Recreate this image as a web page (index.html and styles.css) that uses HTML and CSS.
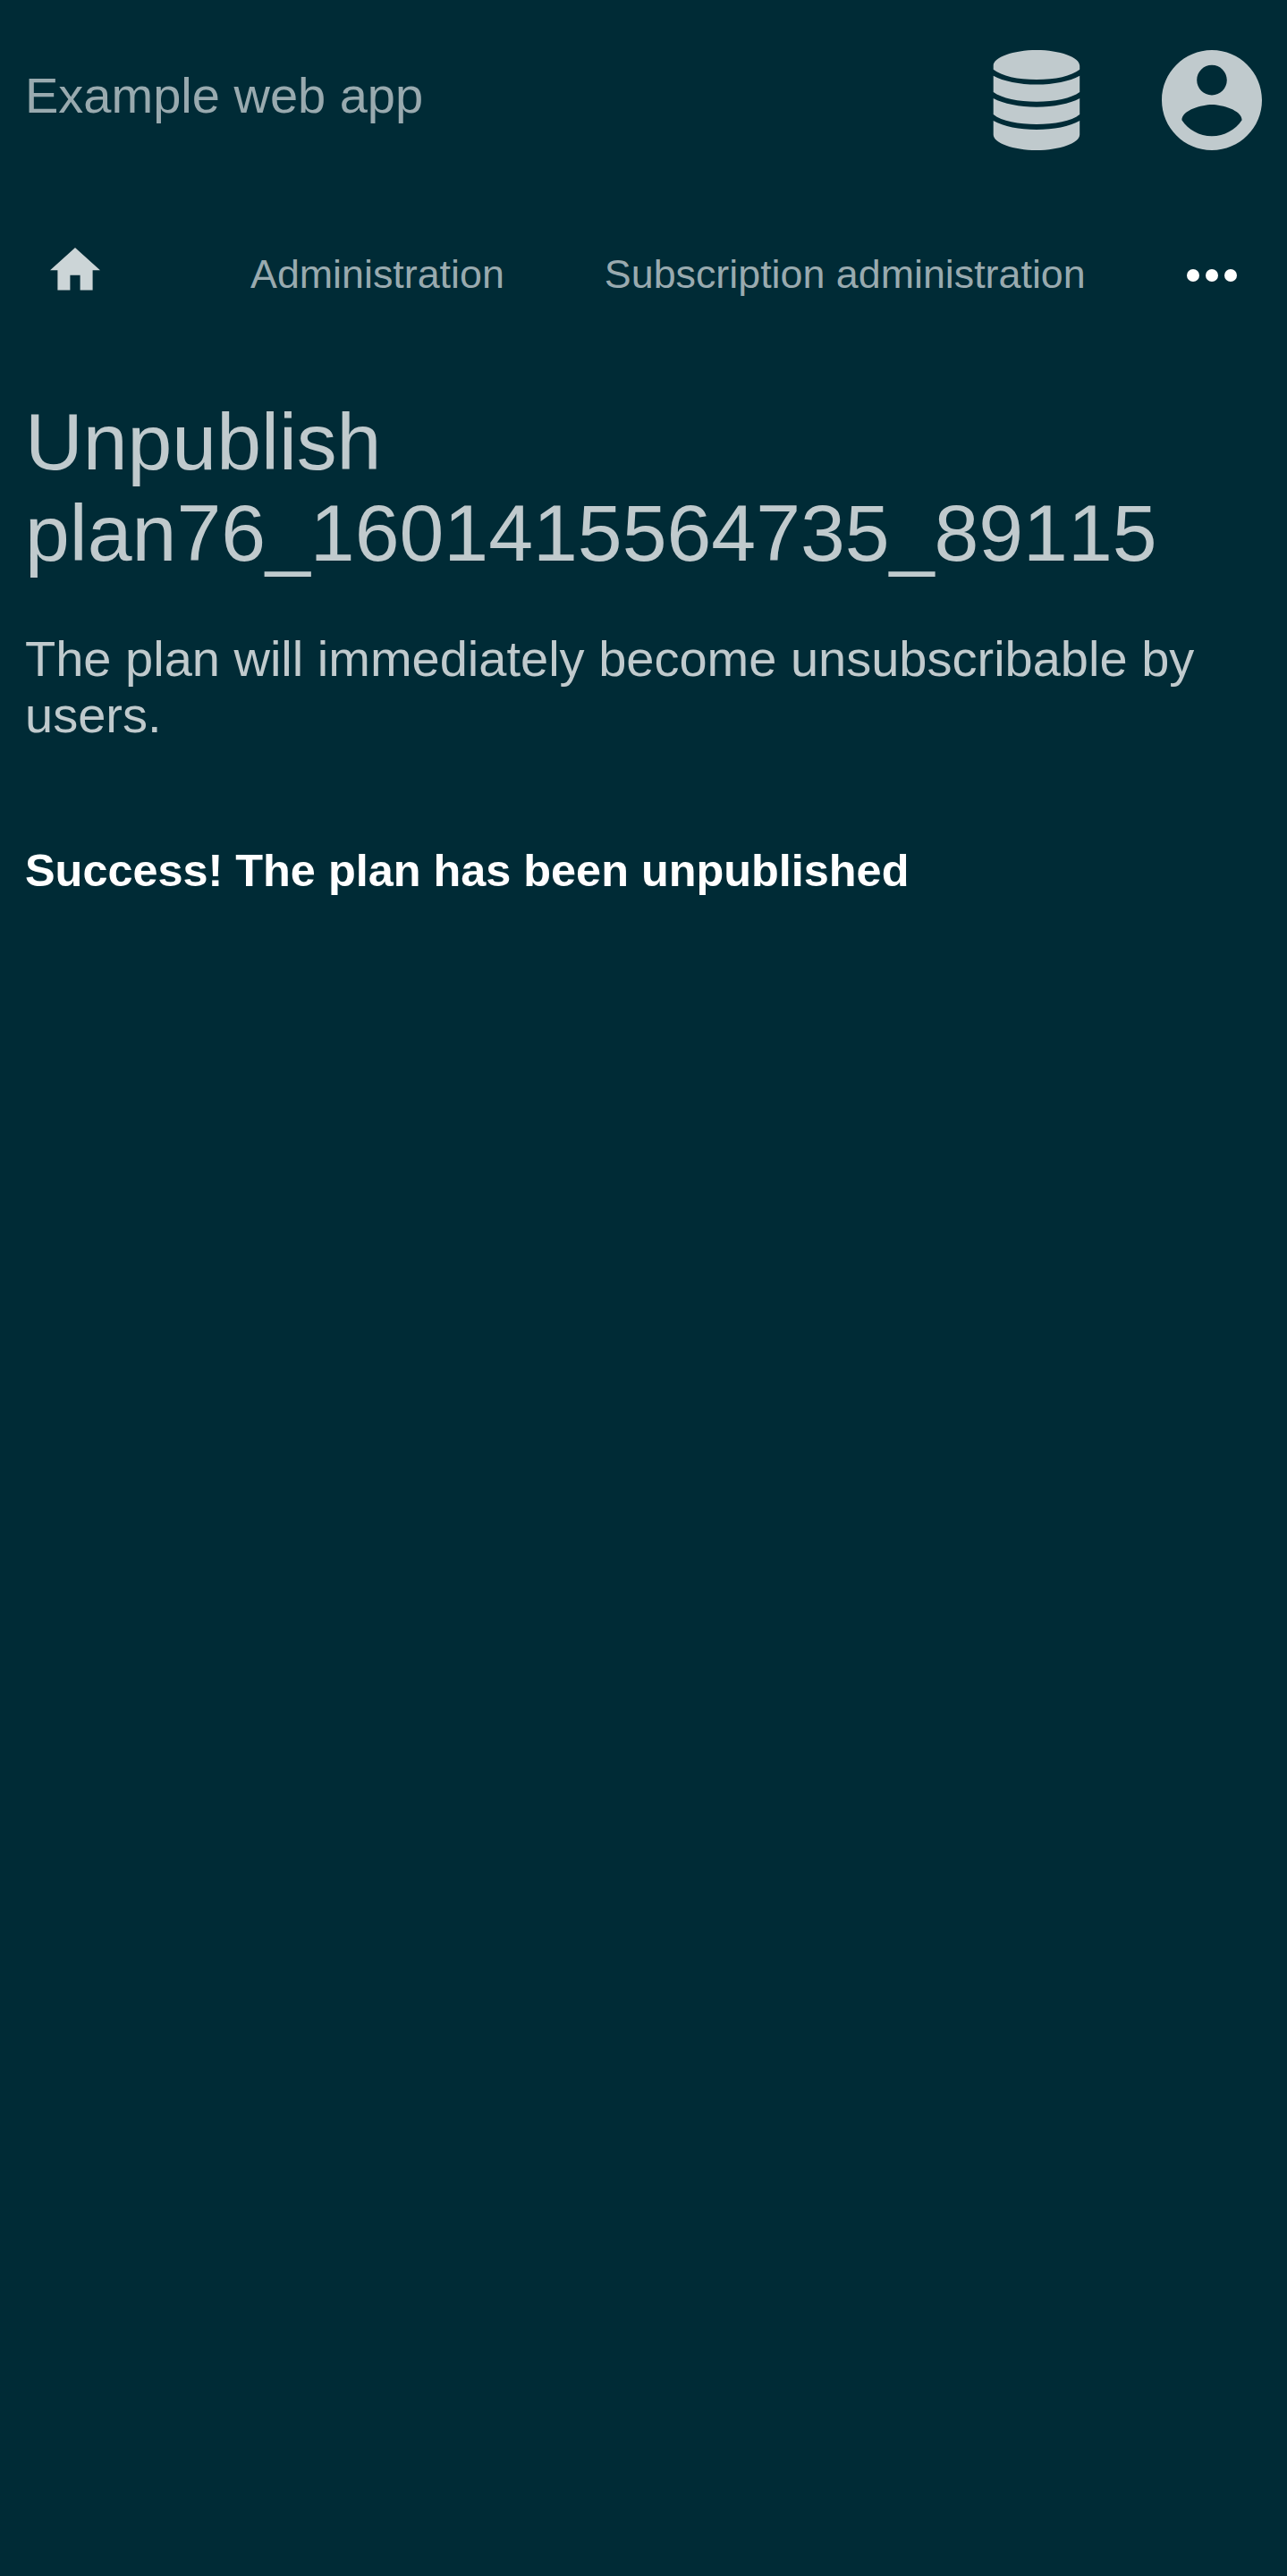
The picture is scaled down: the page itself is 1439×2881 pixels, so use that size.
FILE: index.html
```html
<!DOCTYPE html>
<html lang="en">
<head>
<meta charset="utf-8">
<title>Unpublish plan</title>
<link rel="stylesheet" href="styles.css">
</head>
<body>
<header class="header">
  <a class="brand">Example web app</a>
  <div class="menus">
    <svg class="icon" viewBox="0 0 112 112"><path d="M7.700 17.500C7.700 8 30 0 56 0S104.200 8 104.200 17.500V21.700C95 29 77 33 56 33S17 29 7.700 21.700ZM7.700 28.700C19 35 37 38.500 56 38.500S93 35 104.200 28.700V47C95 54 76 57.700 56 57.700S17 54 7.700 47ZM7.700 54C19 60 37 63.700 56 63.700S93 60 104.200 54V72C95 79.500 76 83 56 83S17 79.500 7.700 72ZM7.700 79C19 85.500 37 89 56 89S93 85.500 104.200 79V94.500C104.200 104 82 112 56 112S7.700 104 7.700 94.500Z"/></svg>
    <svg class="icon" viewBox="2 2 20 20"><path d="M12 2C6.480 2 2 6.480 2 12s4.480 10 10 10 10-4.480 10-10S17.520 2 12 2zm0 3c1.660 0 3 1.340 3 3s-1.340 3-3 3-3-1.340-3-3 1.340-3 3-3zm0 14.200c-2.500 0-4.710-1.280-6-3.220.030-1.990 4-3.080 6-3.080 1.990 0 5.970 1.090 6 3.080-1.290 1.940-3.500 3.220-6 3.220z"/></svg>
  </div>
</header>
<nav class="nav">
  <a class="nav-home"><svg class="home" viewBox="2 3 20 17"><path d="M10 20v-6h4v6h5v-8h3L12 3 2 12h3v8z"/></svg></a>
  <a class="nav-link">Administration</a>
  <a class="nav-link">Subscription administration</a>
  <a class="nav-more"><svg class="dots" viewBox="4 10 16 4"><circle cx="6" cy="12" r="2"/><circle cx="12" cy="12" r="2"/><circle cx="18" cy="12" r="2"/></svg></a>
</nav>
<main class="content">
  <h1 class="title">Unpublish plan76_1601415564735_89115</h1>
  <p class="text">The plan will immediately become unsubscribable by users.</p>
  <p class="message">Success! The plan has been unpublished</p>
</main>
</body>
</html>
```
FILE: styles.css
```css
body {
  margin: 0;
  min-height: 2881px;
  background: #002b36;
  color: #c0cacd;
  font-family: "Liberation Sans", Arial, sans-serif;
  font-size: 56px;
  line-height: 63px;
}
.header {
  display: flex;
  justify-content: space-between;
  align-items: flex-start;
  height: 168px;
  padding: 56px 28.5px 0 28px;
}
.brand {
  padding-top: 19px;
  color: #99aaaf;
}
.menus {
  display: flex;
  gap: 84px;
}
.icon {
  width: 112px;
  height: 112px;
  fill: #c0cacd;
}
.nav {
  display: flex;
  height: 168px;
  padding: 0 56.5px 0 56px;
  color: #99aaaf;
  font-size: 44.8px;
  line-height: 52px;
}
.nav-home {
  width: 56px;
  padding-top: 53px;
  margin-right: 168px;
}
.home {
  display: block;
  width: 56px;
  height: 47.6px;
  fill: #ccd5d7;
}
.nav-link {
  padding-top: 56px;
  margin-right: 112px;
}
.nav-more {
  padding-top: 77px;
  margin-left: auto;
}
.dots {
  display: block;
  width: 56px;
  height: 14px;
  fill: #fff;
}
.content {
  padding: 51px 28px 0;
}
.title {
  margin: 0 0 58px;
  font-size: 89.6px;
  font-weight: 400;
  font-kerning: none;
  line-height: 102px;
}
.text {
  margin: 0 0 115px;
}
.message {
  margin: 0;
  color: #fff;
  font-size: 50.4px;
  font-weight: 700;
  line-height: 56px;
}
```
